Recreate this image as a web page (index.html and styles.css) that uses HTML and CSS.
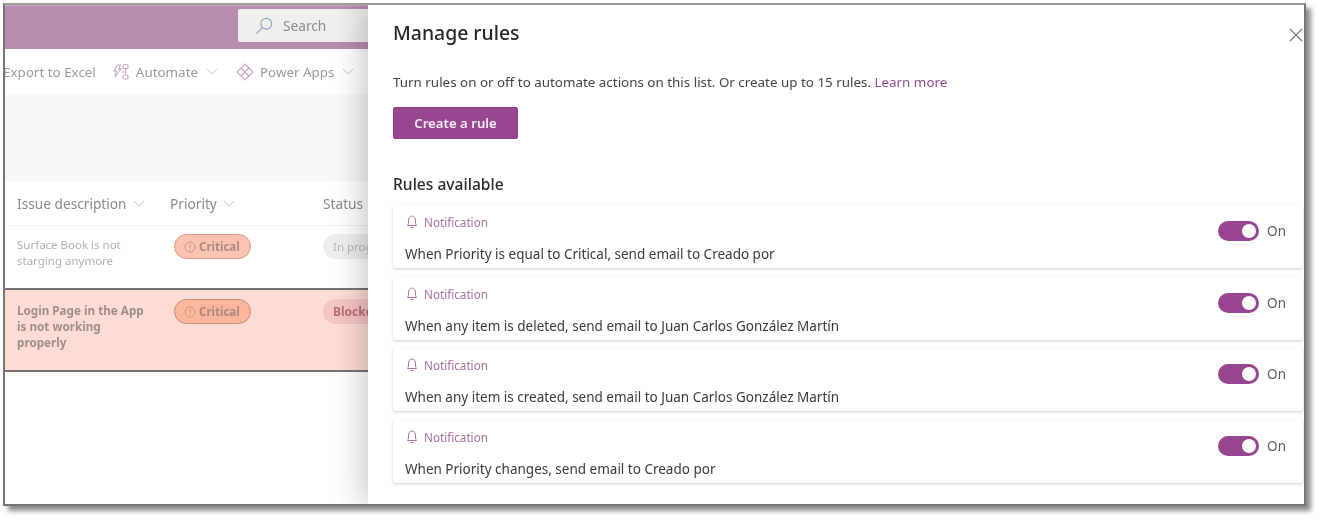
FILE: index.html
```html
<!DOCTYPE html>
<html lang="en">
<head>
<meta charset="utf-8">
<title>Manage rules</title>
<link rel="stylesheet" href="styles.css">
</head>
<body>
<div class="frame">
  <section class="list">
    <header class="suite">
      <div class="search">
        <svg class="search-icon" viewBox="0 0 20 20"><circle cx="12.5" cy="7.5" r="6" /><path d="M8 12 L1.5 18.5" /></svg>
        <span>Search</span>
      </div>
    </header>
    <nav class="commands">
      <span class="cmd cmd-first">Export to Excel</span>
      <span class="cmd">
        <svg class="cmd-icon" viewBox="0 0 18 18"><path d="M5.5 2 H8.5 L6.5 6 H9 L3 14 L4.5 8 H2 Z" /><rect x="11" y="1.5" width="5" height="4" rx="1" /><rect x="11" y="12" width="5" height="4" rx="1" /><path d="M13.5 5.5 V12 M9.5 9 H13.5" /></svg>
        Automate
        <svg class="chev" viewBox="0 0 12 7"><path d="M1 1 L6 6 L11 1" /></svg>
      </span>
      <span class="cmd cmd-apps">
        <svg class="cmd-icon pa" viewBox="0 0 18 18"><path d="M9 1 L17 9 L9 17 L1 9 Z" /><path d="M5 5 L13 13 M13 5 L5 13" /></svg>
        Power Apps
        <svg class="chev" viewBox="0 0 12 7"><path d="M1 1 L6 6 L11 1" /></svg>
      </span>
    </nav>
    <div class="band"></div>
    <div class="table">
      <div class="thead">
        <span class="th">Issue description <svg class="chev" viewBox="0 0 12 7"><path d="M1 1 L6 6 L11 1" /></svg></span>
        <span class="th">Priority <svg class="chev" viewBox="0 0 12 7"><path d="M1 1 L6 6 L11 1" /></svg></span>
        <span class="th">Status</span>
      </div>
      <div class="row">
        <div class="cell-title">Surface Book is not<br>starging anymore</div>
        <div><span class="pill critical"><svg class="crit-icon" viewBox="0 0 12 12"><circle cx="6" cy="6" r="5" /><path d="M6 3 V6.5 M6 8 V9" /></svg>Critical</span></div>
        <div><span class="pill progress">In progress</span></div>
      </div>
      <div class="row row-selected">
        <div class="cell-title">Login Page in the App<br>is not working<br>properly</div>
        <div><span class="pill critical"><svg class="crit-icon" viewBox="0 0 12 12"><circle cx="6" cy="6" r="5" /><path d="M6 3 V6.5 M6 8 V9" /></svg>Critical</span></div>
        <div><span class="pill blocked">Blocked</span></div>
      </div>
    </div>
  </section>

  <aside class="panel">
    <svg class="close" viewBox="0 0 14 14"><path d="M1 1 L13 13 M13 1 L1 13" /></svg>
    <h1>Manage rules</h1>
    <p class="intro">Turn rules on or off to automate actions on this list. Or create up to 15 rules. <a href="#">Learn more</a></p>
    <button class="create">Create a rule</button>
    <h2>Rules available</h2>
    <div class="rules">
      <article class="rule">
        <div class="rule-text">
          <div class="kind"><svg class="bell" viewBox="0 0 12 14"><path d="M1.5 10.5 C2.5 9 2.5 7.5 2.5 5.5 C2.5 3 4 1 6 1 C8 1 9.5 3 9.5 5.5 C9.5 7.5 9.5 9 10.5 10.5 Z" /><path d="M4.5 12.5 H7.5" /></svg>Notification</div>
          <div class="desc">When Priority is equal to Critical, send email to Creado por</div>
        </div>
        <div class="state"><span class="toggle"><span class="knob"></span></span>On</div>
      </article>
      <article class="rule">
        <div class="rule-text">
          <div class="kind"><svg class="bell" viewBox="0 0 12 14"><path d="M1.5 10.5 C2.5 9 2.5 7.5 2.5 5.5 C2.5 3 4 1 6 1 C8 1 9.5 3 9.5 5.5 C9.5 7.5 9.5 9 10.5 10.5 Z" /><path d="M4.5 12.5 H7.5" /></svg>Notification</div>
          <div class="desc">When any item is deleted, send email to Juan Carlos González Martín</div>
        </div>
        <div class="state"><span class="toggle"><span class="knob"></span></span>On</div>
      </article>
      <article class="rule">
        <div class="rule-text">
          <div class="kind"><svg class="bell" viewBox="0 0 12 14"><path d="M1.5 10.5 C2.5 9 2.5 7.5 2.5 5.5 C2.5 3 4 1 6 1 C8 1 9.5 3 9.5 5.5 C9.5 7.5 9.5 9 10.5 10.5 Z" /><path d="M4.5 12.5 H7.5" /></svg>Notification</div>
          <div class="desc">When any item is created, send email to Juan Carlos González Martín</div>
        </div>
        <div class="state"><span class="toggle"><span class="knob"></span></span>On</div>
      </article>
      <article class="rule">
        <div class="rule-text">
          <div class="kind"><svg class="bell" viewBox="0 0 12 14"><path d="M1.5 10.5 C2.5 9 2.5 7.5 2.5 5.5 C2.5 3 4 1 6 1 C8 1 9.5 3 9.5 5.5 C9.5 7.5 9.5 9 10.5 10.5 Z" /><path d="M4.5 12.5 H7.5" /></svg>Notification</div>
          <div class="desc">When Priority changes, send email to Creado por</div>
        </div>
        <div class="state"><span class="toggle"><span class="knob"></span></span>On</div>
      </article>
    </div>
  </aside>
</div>
</body>
</html>
```

FILE: styles.css
```css
* { box-sizing: border-box; }
html, body { margin: 0; height: 100%; background: #fff; overflow: hidden; }
body { font-family: "Noto Sans", "Open Sans", "Liberation Sans", sans-serif; color: #333; }

.frame {
  width: 1303px;
  height: 503px;
  margin: 3px 0 0 3px;
  border: 2px solid #757575;
  border-top-color: #9a9a9a;
  box-shadow: 5px 5px 5px rgba(0, 0, 0, .45);
  display: flex;
  overflow: hidden;
  background: #fff;
  filter: blur(.3px);
}

/* left list */
.list { width: 363px; flex: none; overflow: hidden; }
.suite {
  height: 44px;
  background: #b98cb0;
  padding: 3px 0 0 233px;
  border-top: 1px solid #c9a5c2;
}
.search {
  height: 33px;
  background: #f1eeee;
  border-radius: 2px 0 0 2px;
  display: flex;
  align-items: center;
  gap: 10px;
  padding-left: 17px;
  font-size: 13.7px;
  color: #8a8a8a;
}
.search-icon { width: 18px; height: 18px; fill: none; stroke: #8fa4bd; stroke-width: 1.3; }

.commands {
  height: 45px;
  display: flex;
  align-items: center;
  gap: 16px;
  font-size: 13.4px;
  color: #9a9a9a;
  white-space: nowrap;
}
.cmd { display: flex; align-items: center; gap: 6px; }
.cmd-first { margin-left: -2px; }
.cmd-apps { margin-left: 2px; }
.cmd .chev { margin-left: 2px; }
.cmd-icon { width: 18px; height: 18px; fill: none; stroke: #cfa6c6; stroke-width: 1.1; }
.cmd-icon.pa { stroke: #c9a3bf; }
.chev { width: 12px; height: 7px; fill: none; stroke: #c4c4c4; stroke-width: 1; flex: none; }

.band { height: 87px; background: #f8f8f8; }

.thead, .row {
  display: grid;
  grid-template-columns: 153px 153px 153px;
  padding-left: 12px;
}
.thead {
  height: 45px;
  align-items: center;
  border-bottom: 1px solid #f0f0f0;
  font-size: 13.7px;
  color: #8a8a8a;
}
.th { display: flex; align-items: center; gap: 6px; white-space: nowrap; }
.row {
  height: 62px;
  padding-top: 11px;
  font-size: 11.5px;
  line-height: 16px;
  color: #b0b0b0;
}
.row-selected {
  height: 84px;
  padding-top: 12px;
  background: #fddcd5;
  border-top: 2px solid #737373;
  border-bottom: 2px solid #737373;
  font-size: 11.7px;
  font-weight: 700;
  color: #a08d8a;
}
.pill {
  display: inline-flex;
  align-items: center;
  height: 25px;
  border-radius: 13px;
  padding: 0 10px;
  font-size: 11.5px;
  white-space: nowrap;
  margin-top: -3px;
}
.row > div:nth-child(2) { padding-left: 4px; }
.critical {
  width: 77px;
  padding: 0 9px;
  background: #fcc3b1;
  border: 1px solid #d99a85;
  color: #a98a82;
  font-weight: 700;
  gap: 3px;
}
.row-selected .critical { background: #fdb59c; border-color: #c98d78; }
.crit-icon { width: 12px; height: 12px; fill: none; stroke: #c49a8c; stroke-width: 1; flex: none; }
.progress { background: #eeeeee; color: #b5b5b5; font-weight: 400; }
.blocked { background: #f6c4c3; color: #bb6e78; font-weight: 700; font-size: 12px; }

/* right panel */
.panel {
  flex: 1;
  min-width: 0;
  position: relative;
  background: #fff;
  padding: 14px 0 0 25px;
  box-shadow: -6px 0 28px rgba(0, 0, 0, .22);
}
.close {
  position: absolute;
  top: 23px;
  right: 1px;
  width: 14px;
  height: 14px;
  fill: none;
  stroke: #777;
  stroke-width: 1.2;
}
h1 { margin: 0; font-size: 19.4px; line-height: 28px; font-weight: 500; color: #262626; }
.intro { margin: 25px 0 0; font-size: 13.4px; line-height: 20px; color: #444; }
.intro a { color: #8e4b8f; text-decoration: none; }
.create {
  display: block;
  width: 125px;
  height: 32px;
  margin-top: 15px;
  border: 1px solid #8f3f8e;
  border-radius: 2px;
  background: #97468f;
  color: #fbeefa;
  font: 600 13.2px "Noto Sans", "Open Sans", sans-serif;
  padding: 0;
}
h2 { margin: 33px 0 0; font-size: 15.6px; line-height: 24px; font-weight: 500; color: #2b2b2b; }
.rules { display: flex; flex-direction: column; gap: 8.5px; margin-top: 9px; padding-right: 1px; }
.rule {
  height: 63px;
  display: flex;
  justify-content: space-between;
  padding: 7px 17px 0 12px;
  border-radius: 2px;
  box-shadow: 0 1px 3px rgba(0, 0, 0, .2);
}
.kind {
  display: flex;
  align-items: center;
  gap: 6px;
  height: 20px;
  padding-left: 1px;
  font-size: 11.7px;
  color: #a8709f;
}
.bell { width: 12px; height: 14px; fill: none; stroke: #a86ea0; stroke-width: 1; }
.desc { margin-top: 12px; font-size: 13.5px; line-height: 20px; color: #3a3a3a; white-space: nowrap; }
.state {
  display: flex;
  align-items: center;
  gap: 8px;
  height: 20px;
  margin-top: 9px;
  font-size: 13.5px;
  color: #5c5c5c;
}
.toggle {
  width: 41px;
  height: 20px;
  border-radius: 10px;
  background: #97468f;
  display: flex;
  align-items: center;
  justify-content: flex-end;
  padding-right: 3px;
}
.knob { width: 14px; height: 14px; border-radius: 50%; background: #fff; }
```
